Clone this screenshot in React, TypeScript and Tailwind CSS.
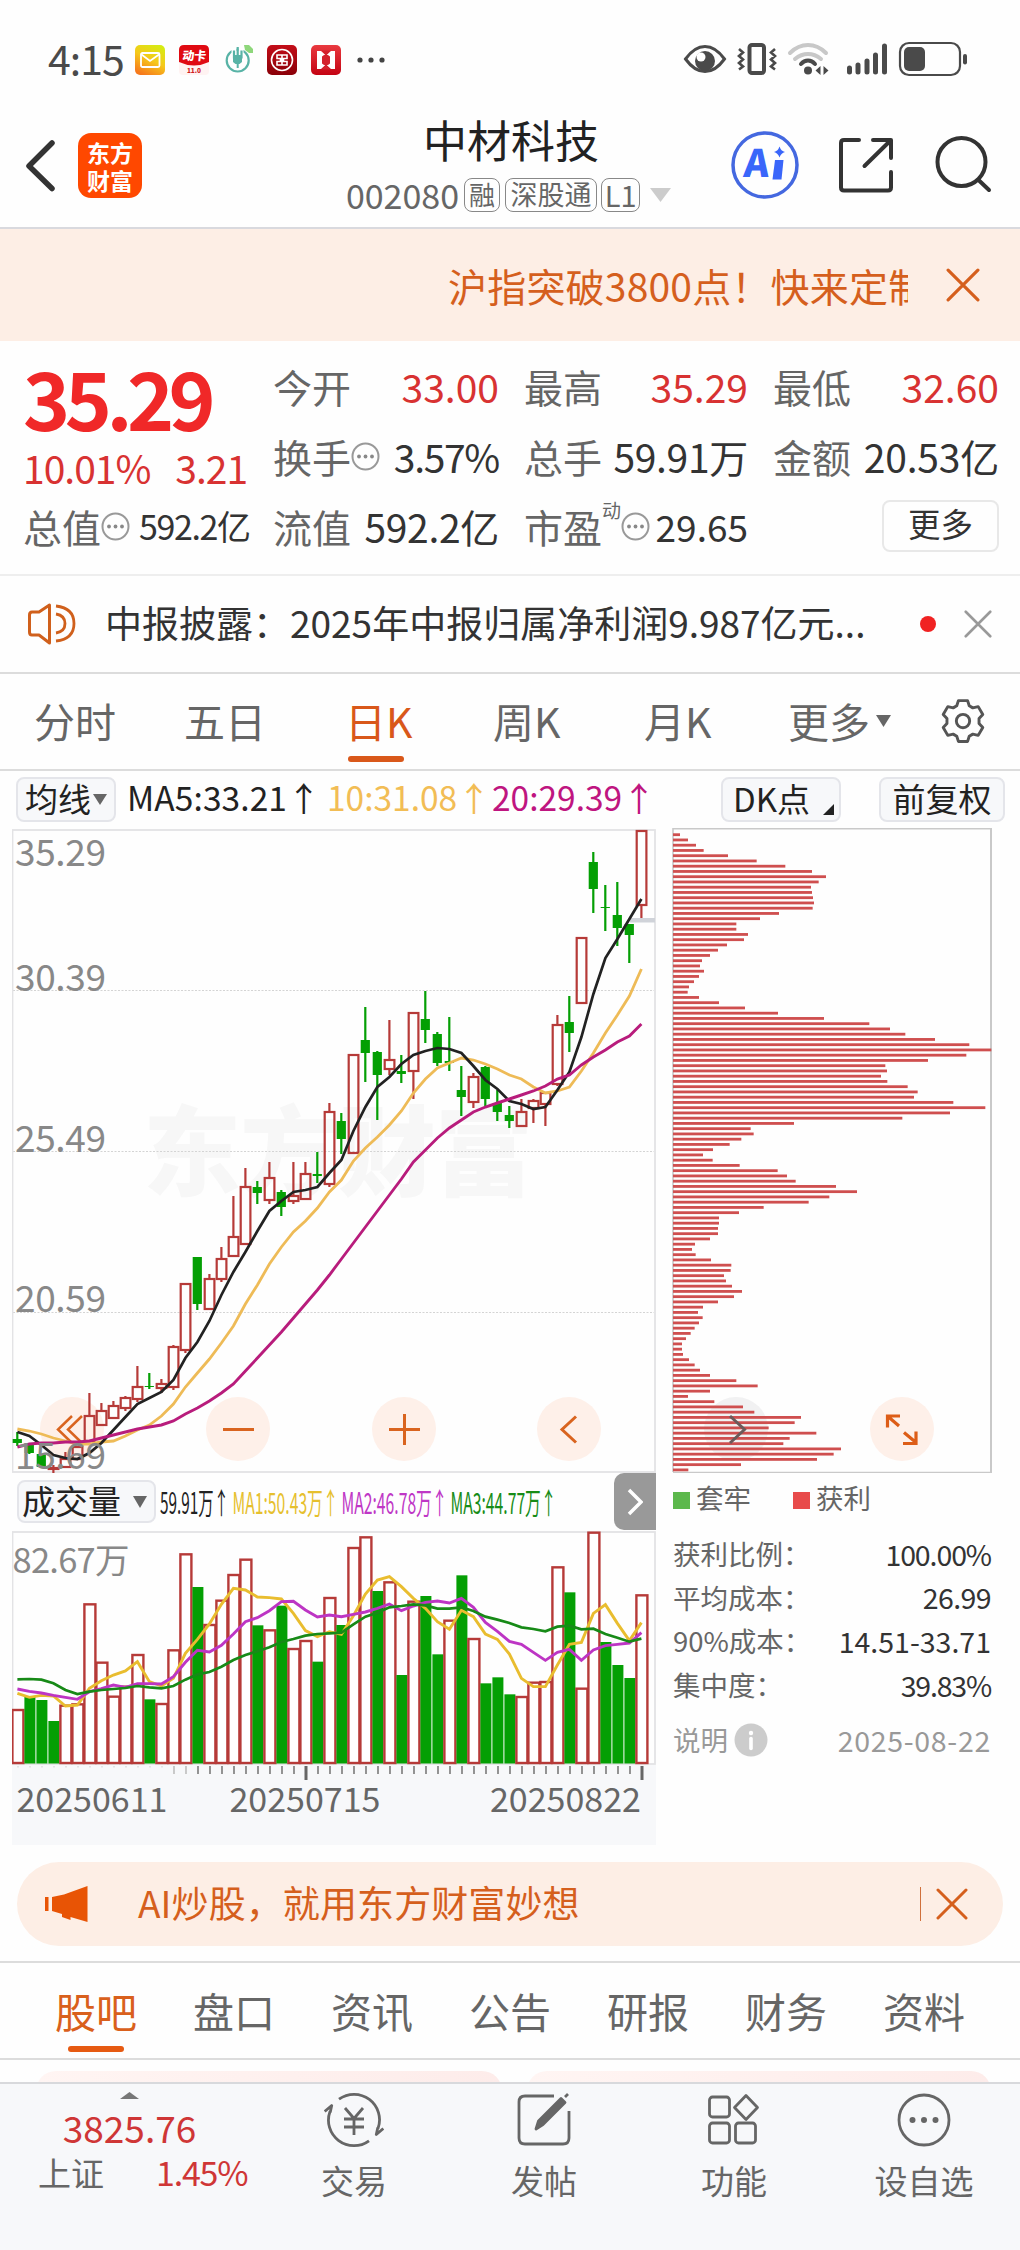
import React from 'react';

type Candle = [up: number, top: number, bottom: number, high: number, low: number];

const X0 = 17.4;
const STEP = 12;

const candles: Candle[] = [
  [0, 1439, 1443, 1432, 1446], [0, 1445, 1453, 1445, 1454], [0, 1454, 1467, 1454, 1468],
  [1, 1468, 1469, 1465, 1473], [1, 1459, 1467, 1452, 1467], [1, 1447, 1459, 1447, 1459],
  [1, 1416, 1441, 1393, 1441], [1, 1411, 1425, 1403, 1425], [1, 1406, 1418, 1401, 1418],
  [1, 1398, 1408, 1396, 1411], [1, 1387, 1399, 1366, 1402], [0, 1386, 1387, 1373, 1389],
  [1, 1384, 1388, 1379, 1393], [1, 1347, 1387, 1345, 1390], [1, 1284, 1350, 1284, 1353],
  [0, 1257, 1304, 1257, 1310], [1, 1279, 1309, 1274, 1309], [1, 1259, 1279, 1247, 1282],
  [1, 1237, 1256, 1196, 1256], [1, 1187, 1244, 1168, 1244], [0, 1187, 1193, 1181, 1204],
  [1, 1178, 1200, 1162, 1204], [0, 1192, 1207, 1190, 1216], [1, 1196, 1201, 1162, 1204],
  [1, 1174, 1199, 1162, 1199], [0, 1174, 1176, 1152, 1183], [1, 1112, 1184, 1103, 1187],
  [0, 1121, 1139, 1113, 1154], [1, 1055, 1153, 1055, 1153], [0, 1040, 1053, 1007, 1082],
  [0, 1052, 1075, 1051, 1120], [1, 1060, 1069, 1020, 1075], [0, 1071, 1074, 1055, 1083],
  [1, 1013, 1071, 1013, 1099], [0, 1019, 1030, 991, 1043], [0, 1034, 1063, 1032, 1066],
  [0, 1061, 1063, 1017, 1071], [0, 1090, 1097, 1066, 1116], [1, 1077, 1102, 1073, 1108],
  [0, 1067, 1099, 1066, 1106], [0, 1103, 1112, 1090, 1121], [0, 1115, 1121, 1106, 1128],
  [1, 1112, 1126, 1099, 1126], [1, 1101, 1108, 1099, 1123], [1, 1093, 1104, 1093, 1126],
  [1, 1025, 1084, 1015, 1086], [0, 1022, 1033, 996, 1052], [1, 938, 1003, 938, 1003],
  [0, 862, 889, 852, 913], [0, 907, 908, 885, 931], [0, 915, 928, 882, 946],
  [0, 924, 935, 924, 963], [1, 831, 905, 831, 918],
];

const ma5 = [
  1432, 1436, 1445, 1455, 1458, 1459, 1453, 1443, 1430, 1417, 1404, 1398, 1392, 1380, 1358, 1342, 1321, 1295,
  1272, 1252, 1231, 1211, 1201, 1192, 1190, 1187, 1173, 1160, 1131, 1107, 1087, 1077, 1064, 1055, 1051, 1048,
  1049, 1053, 1066, 1080, 1089, 1101, 1104, 1109, 1107, 1090, 1072, 1037, 994, 958, 939, 919, 899,
];
const ma10 = [
  1429, 1431, 1434, 1438, 1441, 1444, 1444, 1442, 1441, 1436, 1430, 1425, 1416, 1404, 1387, 1373, 1359, 1343,
  1326, 1304, 1285, 1264, 1247, 1232, 1221, 1208, 1192, 1180, 1161, 1148, 1137, 1125, 1111, 1093, 1079, 1068,
  1063, 1058, 1060, 1064, 1069, 1075, 1079, 1087, 1093, 1091, 1087, 1071, 1053, 1033, 1015, 996, 969,
];
const ma20 = [
  1447, 1444, 1443, 1443, 1442, 1442, 1441, 1438, 1435, 1432, 1429, 1427, 1425, 1421, 1414, 1408, 1401, 1393,
  1384, 1371, 1358, 1345, 1332, 1318, 1304, 1290, 1275, 1259, 1243, 1227, 1211, 1195, 1179, 1162, 1150, 1138,
  1128, 1120, 1112, 1107, 1103, 1099, 1095, 1091, 1086, 1079, 1075, 1065, 1057, 1050, 1042, 1036, 1024,
];

// volume series are stored as depth below the panel top, in thirds of a pixel
const volumes: [number, number][] = [
  [1, 720], [0, 680], [0, 690], [0, 753], [1, 707], [1, 703], [1, 403], [1, 578], [1, 680], [1, 650], [1, 555],
  [0, 688], [1, 702], [1, 541], [1, 253], [0, 351], [1, 465], [1, 392], [1, 315], [1, 269], [0, 466], [1, 481],
  [0, 407], [1, 537], [1, 513], [0, 575], [1, 384], [0, 465], [1, 234], [1, 202], [0, 363], [1, 337], [0, 615],
  [1, 395], [0, 378], [0, 553], [1, 452], [0, 316], [1, 507], [0, 640], [0, 622], [0, 673], [1, 681], [1, 638],
  [1, 636], [1, 292], [0, 367], [1, 656], [1, 188], [0, 516], [0, 585], [0, 624], [1, 376],
];
const vma1 = [
  670, 682, 676, 678, 708, 705, 655, 632, 615, 603, 575, 635, 648, 625, 550, 508, 462, 403, 355, 360, 381, 383,
  387, 430, 482, 500, 485, 493, 437, 372, 330, 320, 350, 385, 415, 455, 478, 421, 440, 492, 508, 552, 625, 650,
  650, 585, 523, 517, 430, 404, 460, 512, 458,
];
const vma2 = [
  657, 664, 669, 676, 682, 688, 665, 656, 645, 652, 641, 641, 642, 620, 577, 541, 546, 526, 492, 455, 443, 422,
  395, 394, 420, 441, 435, 440, 433, 426, 415, 402, 422, 408, 397, 393, 399, 385, 412, 457, 484, 514, 523, 547,
  571, 547, 538, 571, 540, 527, 523, 519, 488,
];
const vma3 = [
  628, 627, 629, 640, 660, 672, 665, 660, 657, 654, 648, 652, 655, 648, 629, 613, 606, 590, 570, 555, 544, 532,
  516, 507, 497, 492, 490, 488, 463, 440, 428, 412, 408, 403, 406, 416, 416, 412, 423, 440, 449, 459, 472, 477,
  484, 470, 467, 478, 476, 492, 503, 515, 506,
];

const chips = [
  60, 84, 108, 131, 204, 290, 376, 456, 498, 476, 453, 456, 459, 462, 458, 357, 300, 229, 229, 264, 252, 201, 174,
  150, 126, 120, 132, 117, 102, 87, 83, 117, 177, 255, 354, 492, 628, 690, 736, 825, 928, 994, 919, 804, 676, 681,
  663, 682, 743, 773, 762, 880, 976, 870, 727, 402, 272, 281, 244, 209, 159, 129, 158, 239, 353, 381, 407, 528,
  591, 508, 446, 311, 237, 177, 177, 174, 174, 150, 105, 96, 107, 153, 214, 212, 192, 198, 216, 246, 222, 174, 129,
  114, 128, 117, 104, 92, 78, 66, 66, 69, 87, 104, 120, 150, 229, 293, 150, 84, 163, 249, 283, 423, 404, 326, 469,
  389, 370, 543, 521, 471, 243, 85,
];

const cx = (i: number) => X0 + i * STEP;
const linePoints = (ys: number[]) => ys.map((y, i) => `${cx(i)},${y}`).join(' ');
const volY = (v: number) => 1470 + v / 3;

const MoreDot: React.FC = () => (
  <svg className="h-[29px] w-[29px] shrink-0" viewBox="0 0 29 29">
    <circle cx="14.5" cy="14.5" r="13" fill="none" stroke="#999" strokeWidth="2" />
    {[8, 14.5, 21].map((x) => (
      <circle key={x} cx={x} cy="14.5" r="1.9" fill="#888" />
    ))}
  </svg>
);

const Cross: React.FC<{ className: string; width?: number }> = ({ className, width = 3 }) => (
  <svg className={className} viewBox="0 0 32 32" fill="none" stroke="currentColor" strokeWidth={width} strokeLinecap="round">
    <path d="M2 2 30 30M30 2 2 30" />
  </svg>
);

const StatusBar: React.FC = () => (
  <div className="flex h-[110px] items-start pl-[48px] pt-[40px] text-[#4a4a4a]">
    <span className="-mt-[1px] w-[87px] text-[41px] leading-[36px] tracking-[-1px]">4:15</span>
    <div className="flex items-center gap-[14px] pt-[5px]">
      <svg className="h-[30px] w-[30px]" viewBox="0 0 30 30">
        <defs>
          <linearGradient id="mail" x1="0.8" y1="0" x2="0.3" y2="1">
            <stop offset="0" stopColor="#d5ec12" />
            <stop offset="0.5" stopColor="#f6c81a" />
            <stop offset="1" stopColor="#f6791c" />
          </linearGradient>
        </defs>
        <rect width="30" height="30" rx="5" fill="url(#mail)" />
        <rect x="6" y="8" width="18.5" height="14" rx="1.5" fill="none" stroke="#fff" strokeWidth="1.8" />
        <path d="M6.500 9.500 15 16l9-6.500" fill="none" stroke="#fff" strokeWidth="1.800" />
      </svg>
      <svg className="h-[30px] w-[30px]" viewBox="0 0 30 30">
        <rect y="12" width="30" height="18" rx="4" fill="#fff3f2" />
        <path d="M0 5q0-5 5-5h20q5 0 5 5v12q-15 7-30 0z" fill="#e00a12" />
        <text x="15" y="15.500" fontSize="12" fontWeight="900" fill="#fff" textAnchor="middle" transform="skewX(-6) translate(1.500 0)">动卡</text>
        <text x="15" y="28" fontSize="6.500" fontWeight="900" fill="#d01c22" textAnchor="middle">11.0</text>
      </svg>
      <svg className="h-[30px] w-[30px]" viewBox="0 0 30 30" fill="none" stroke="#58b3a6">
        <circle cx="14.700" cy="15.500" r="11" strokeWidth="2.200" />
        <path d="M11 3v11h7V3" stroke="#fff" strokeWidth="5" />
        <path d="M11 5.500v8M18.500 5.500v8M14.700 2v8" strokeWidth="2.200" />
        <path d="M10 10h9v7l-2.500 2h-4L10 17z" fill="#58b3a6" stroke="none" />
        <path d="M14.700 18v5" strokeWidth="2" />
        <path d="M21 0h5l4 4v4h-4l-4-3z" fill="#8ed77b" stroke="none" />
      </svg>
      <svg className="h-[30px] w-[30px]" viewBox="0 0 30 30" fill="none" stroke="#fff">
        <defs>
          <linearGradient id="icbc" x1="0" y1="0" x2="0" y2="1">
            <stop offset="0" stopColor="#c30d18" />
            <stop offset="1" stopColor="#8a0008" />
          </linearGradient>
        </defs>
        <rect width="30" height="30" rx="5" fill="url(#icbc)" stroke="none" />
        <circle cx="15" cy="15" r="10.500" strokeWidth="1.600" />
        <path d="M10 10h10v3.500h-3.500v3H20V20H10v-3.500h3.500v-3H10zM15 10v10" strokeWidth="1.600" />
      </svg>
      <svg className="h-[30px] w-[30px]" viewBox="0 0 30 30">
        <defs>
          <linearGradient id="bank" x1="0" y1="0" x2="0" y2="1">
            <stop offset="0" stopColor="#e93a40" />
            <stop offset="1" stopColor="#c40313" />
          </linearGradient>
        </defs>
        <rect width="30" height="30" rx="5" fill="url(#bank)" />
        <path d="M6 6h4l5 4.500L20 6h4v18h-4l-5-4.500L10 24H6z" fill="#fff" />
        <path d="M11 11.500 13 10h4l2 1.500v7L17 20h-4l-2-1.500z" fill="#d3222c" />
        <path d="M10.500 5.500h9L15 10.500zM10.500 24.500h9L15 19.500z" fill="#d3222c" />
      </svg>
      <svg className="ml-[2px] h-[30px] w-[28px]" viewBox="0 0 28 30" fill="#444">
        <circle cx="3" cy="15" r="2.600" />
        <circle cx="14" cy="15" r="2.600" />
        <circle cx="25" cy="15" r="2.600" />
      </svg>
    </div>
    <svg className="ml-auto mr-[50px] h-[38px] w-[290px]" viewBox="680 40 290 38" fill="none" stroke="#4a4a4a">
      <path d="M685.500 59q9-12.500 19.500-12.500T724.500 59q-9 12.500-19.500 12.500T685.500 59z" strokeWidth="3" />
      <circle cx="705" cy="61" r="10" fill="#4a4a4a" stroke="none" />
      <circle cx="701" cy="57" r="4.500" fill="#fff" stroke="none" />
      <rect x="749.500" y="45" width="14.500" height="28" rx="2.500" strokeWidth="4" />
      <path d="M739 49l4 3.500-4 3.500 4 3.500-4 3.500 4 3.500-4 3M775 49l-4 3.500 4 3.500-4 3.500 4 3.500-4 3.500 4 3" strokeWidth="2.600" />
      <g strokeWidth="4" strokeLinecap="round">
        <path d="M790 53q8-8 18-8t18 8" stroke="#c8c8c8" />
        <path d="M795 59q6-5 13-5t13 5" stroke="#c8c8c8" />
        <path d="M801 64q3-3.500 7-3.500t7 3.500" />
      </g>
      <circle cx="808" cy="70.500" r="4" fill="#4a4a4a" stroke="none" />
      <path d="M820.500 66v9l-5-4.500zM823.500 66v9l5-4.500z" fill="#4a4a4a" stroke="none" />
      <g strokeWidth="5" strokeLinecap="round">
        <path d="M849.500 68v4M858 65v7M867 61v11M875.500 55v17M884.500 46v26" />
      </g>
      <rect x="900" y="43" width="60" height="32" rx="9" strokeWidth="2.200" />
      <rect x="904" y="47" width="21" height="24" rx="5" fill="#4a4a4a" stroke="none" />
      <path d="M965 56v6.500" strokeWidth="4" strokeLinecap="round" />
    </svg>
  </div>
);

const Header: React.FC = () => (
  <header className="flex h-[119px] items-start border-b-2 border-[#d9d9de] pl-[24px] pr-[26px]">
    <svg className="mt-[28px] h-[56px] w-[34px]" viewBox="0 0 34 56" fill="none" stroke="#333" strokeWidth="5.500" strokeLinecap="round" strokeLinejoin="round">
      <path d="M28 5 5 28l23 22.500" />
    </svg>
    <div className="ml-[20px] mt-[23px] flex h-[65px] w-[64px] flex-col items-center justify-center rounded-[13px] bg-[#ff4800] text-[23px] font-bold leading-[28px] text-white">
      <span>东方</span>
      <span>财富</span>
    </div>
    <div className="ml-[196px] flex w-[346px] flex-col items-center">
      <h1 className="h-[68px] pt-[1px] text-[44px] leading-[57px] text-[#222]">中材科技</h1>
      <div className="-ml-[5px] flex items-center text-[#666]">
        <span className="mr-[5px] text-[34px] leading-[34px]">002080</span>
        <span className="mr-[5px] h-[34px] w-[36px] rounded-[8px] border border-[#888] text-center text-[26px] leading-[30px]">融</span>
        <span className="mr-[4px] h-[34px] w-[92px] rounded-[8px] border border-[#888] text-center text-[27px] leading-[30px]">深股通</span>
        <span className="h-[34px] w-[39px] rounded-[8px] border border-[#888] text-center text-[29px] leading-[30px]">L1</span>
        <svg className="ml-[10px] h-[14px] w-[21px]" viewBox="0 0 21 14" fill="#ccc">
          <path d="M0 0h21L10.500 14z" />
        </svg>
      </div>
    </div>
    <svg className="ml-auto h-[118px] w-[270px]" viewBox="725 110 270 118" fill="none">
      <circle cx="766" cy="165" r="32" stroke="#4468e0" strokeWidth="3.500" />
      <g fill="#3a66fa" stroke="none">
        <text x="757" y="177.500" fontSize="38" fontWeight="900" textAnchor="middle" transform="skewX(-5) translate(15 0)">A</text>
        <path d="M776 160h8.500l-2 19.500h-9z" />
        <path d="M780.500 146.500q1.500 4.500 5.500 5.500-4 1-5.500 5.500-1.500-4.500-5.500-5.500 4-1 5.500-5.500z" />
      </g>
      <g stroke="#333" strokeWidth="4" strokeLinecap="round" strokeLinejoin="round">
        <path d="M860 140h-15q-3 0-3 3v44.500q0 3 3 3h44q3 0 3-3V172M874 140h18v18M891 141l-25.500 25" />
        <circle cx="962.500" cy="162" r="24" />
        <path d="M979.500 180l10.500 10" />
      </g>
    </svg>
  </header>
);

const stat = 'flex items-center text-[39px] leading-none';

const Quote: React.FC = () => (
  <section className="flex h-[235px] border-b-2 border-[#eeeeee] pl-[23px]">
    <div className="w-[250px]">
      <div className="mt-[20px] h-[76px] text-[80px] font-bold leading-[70px] tracking-[-5.500px] text-[#f02828]">35.29</div>
      <div className="flex h-[58px] items-center gap-[25px] pt-[2px] text-[39px] leading-none tracking-[-1px] text-[#d83232]">
        <span>10.01%</span>
        <span>3.21</span>
      </div>
      <div className="mt-[2px] flex h-[58px] items-center">
        <span className="text-[39px] leading-none text-[#666]">总值</span>
        <MoreDot />
        <span className="ml-[9px] text-[34px] leading-none tracking-[-1.400px] text-[#333]">592.2亿</span>
      </div>
    </div>
    <div className="grid h-[210px] w-[726px] grid-cols-[226px_224px_226px] grid-rows-[70px_70px_70px] gap-x-[25px] pt-[10px] text-[#333]">
      <div className={stat}>
        <span className="text-[#666]">今开</span>
        <span className="ml-auto text-[#d83232]">33.00</span>
      </div>
      <div className={stat}>
        <span className="text-[#666]">最高</span>
        <span className="ml-auto text-[#d83232]">35.29</span>
      </div>
      <div className={stat}>
        <span className="text-[#666]">最低</span>
        <span className="ml-auto text-[#d83232]">32.60</span>
      </div>
      <div className={stat}>
        <span className="text-[#666]">换手</span>
        <MoreDot />
        <span className="ml-auto tracking-[-1.300px]">3.57%</span>
      </div>
      <div className={stat}>
        <span className="text-[#666]">总手</span>
        <span className="ml-auto tracking-[-0.300px]">59.91万</span>
      </div>
      <div className={stat}>
        <span className="text-[#666]">金额</span>
        <span className="ml-auto tracking-[-0.200px]">20.53亿</span>
      </div>
      <div className={stat}>
        <span className="text-[#666]">流值</span>
        <span className="ml-auto tracking-[-0.300px]">592.2亿</span>
      </div>
      <div className={stat}>
        <span className="text-[#666]">市盈</span>
        <span className="mb-[34px] text-[19px] text-[#666]">动</span>
        <MoreDot />
        <span className="ml-auto text-[37px]">29.65</span>
      </div>
      <div className="flex items-center justify-end">
        <button className="h-[52px] w-[117px] rounded-[8px] border-2 border-[#e8e8e8] pb-[5px] text-[32.500px] leading-none">更多</button>
      </div>
    </div>
  </section>
);

const News: React.FC = () => (
  <section className="flex h-[98px] items-center border-b-2 border-[#dcdcdc]">
    <svg className="ml-[27px] h-[44px] w-[50px]" viewBox="0 0 50 44" fill="none" stroke="#d0601c" strokeWidth="3" strokeLinejoin="round">
      <path d="M22.500 3v38L12 33H5q-2.500 0-2.500-3V13q0-3 2.500-3h7z" />
      <path d="M29 12q9 1.500 9 9.500t-9 9.500M29 4q18 2 18 17.500T29 39" strokeWidth="2.800" />
    </svg>
    <span className="ml-[28px] whitespace-nowrap pb-[3px] text-[37px] leading-none text-[#333]">中报披露：2025年中报归属净利润9.987亿元...</span>
    <span className="ml-auto h-[16px] w-[16px] rounded-full bg-[#f02222]" />
    <Cross className="ml-[28px] mr-[28px] h-[28px] w-[28px] text-[#999]" />
  </section>
);

const PeriodTabs: React.FC = () => (
  <nav className="flex h-[97px] items-start border-b-2 border-[#dcdcdc] pt-[24px] text-[41px] leading-[44px] text-[#666]">
    <span className="ml-[34px] w-[150px]">分时</span>
    <span className="w-[161px]">五日</span>
    <span className="relative w-[148px] text-[#d9581a]">
      日K
      <i className="absolute left-[3px] top-[58px] h-[6px] w-[56px] rounded-full bg-[#d9581a]" />
    </span>
    <span className="w-[151px]">周K</span>
    <span className="w-[144px]">月K</span>
    <span className="w-[88px]">更多</span>
    <svg className="mt-[17px] h-[12px] w-[15px]" viewBox="0 0 15 12" fill="#666">
      <path d="M0 0h15L7.500 12z" />
    </svg>
    <svg className="ml-[47px] -mt-[2px] h-[50px] w-[50px]" viewBox="0 0 24 24" fill="none" stroke="#555" strokeWidth="1.400" strokeLinejoin="round">
      <path d="M9.800 2.200h4.400l.8 2.500 1.700 1 2.600-.6 2.200 3.800-1.800 1.900v2.400l1.800 1.900-2.200 3.800-2.600-.6-1.700 1-.8 2.500H9.800L9 19.300l-1.700-1-2.600.6-2.200-3.800 1.800-1.900v-2.400L2.500 8.900l2.200-3.800 2.600.6 1.700-1z" />
      <circle cx="12" cy="12" r="3.200" />
    </svg>
  </nav>
);

const chipBtn = 'flex items-center rounded-[8px] border-2 border-[#e4e5ea] bg-[#f7f8fa] leading-none text-[#222]';

const AverageRow: React.FC = () => (
  <div className="flex h-[57px] items-start pl-[16px] pt-[6px] text-[33px] leading-none">
    <div className={`${chipBtn} h-[45px] w-[100px] pl-[7px] pb-[3px]`}>
      均线
      <svg className="ml-[2px] mt-[2px] h-[11px] w-[14px]" viewBox="0 0 14 11" fill="#666">
        <path d="M0 0h14L7 11z" />
      </svg>
    </div>
    <span className="ml-[11px] w-[200px] whitespace-nowrap pt-[3px] text-[33.500px] tracking-[0.100px] text-[#222]">MA5:33.21↑</span>
    <span className="w-[165px] whitespace-nowrap pt-[3px] text-[33.500px] text-[#f2bd55]">10:31.08↑</span>
    <span className="whitespace-nowrap pt-[3px] text-[33.500px] text-[#bf1580]">20:29.39↑</span>
    <div className={`${chipBtn} relative ml-auto h-[45px] w-[120px] pl-[10px] pb-[3px]`}>
      DK点
      <svg className="absolute bottom-[5px] right-[5px] h-[11px] w-[11px]" viewBox="0 0 11 11" fill="#222">
        <path d="M11 0v11H0z" />
      </svg>
    </div>
    <div className={`${chipBtn} ml-[38px] mr-[15px] h-[45px] w-[126px] justify-center pb-[3px]`}>前复权</div>
  </div>
);

const PriceChart: React.FC = () => (
  <svg className="block h-[645px] w-[644px]" viewBox="12 828 644 645" fill="none">
    <text x="143" y="1188" fontSize="98" fontWeight="900" fill="#f7f7f7" textLength="390">东方财富</text>
    {[72, 238, 404, 569].map((x) => (
      <circle key={x} cx={x} cy="1429" r="32" fill="#fef0e9" />
    ))}
    {[990.500, 1151.500, 1312.500].map((y) => (
      <path key={y} d={`M13 ${y}H654`} stroke="#d4d4d4" strokeDasharray="2 1.500" />
    ))}
    <rect x="12.500" y="830" width="642.500" height="642" stroke="#e3e3e5" strokeWidth="1.800" />
    <g stroke="#d9641f" strokeWidth="3">
      <path d="M72 1416 58 1429.500 72 1443M82 1416 68 1429.500 82 1443" strokeWidth="2.500" />
      <path d="M223 1429.500h31M389 1429.500h31M404.500 1414v31M576 1416.500 562 1429.500 576 1442.500" />
    </g>
    <rect x="630" y="918" width="25" height="4.500" fill="#d0d3d9" />
    {candles.map(([up, top, bottom, high, low], i) =>
      up ? (
        <g key={i} stroke="#b63a38" strokeWidth="2.200">
          <path d={`M${cx(i)} ${high}V${top}M${cx(i)} ${bottom}V${low}`} />
          <rect x={cx(i) - 4.700} y={top} width="9.700" height={Math.max(1, bottom - top)} />
        </g>
      ) : (
        <g key={i} fill="#049f04">
          <rect x={cx(i) - 1.200} y={high} width="2.200" height={low - high} />
          <rect x={cx(i) - 4.700} y={top} width="9.200" height={Math.max(1, bottom - top)} />
        </g>
      ),
    )}
    <polyline points={linePoints(ma10)} stroke="#eebb57" strokeWidth="2.800" />
    <polyline points={linePoints(ma5)} stroke="#222" strokeWidth="2.700" />
    <polyline points={linePoints(ma20)} stroke="#b81c7c" strokeWidth="2.900" />
    <g fill="#888" fontSize="37">
      <text x="15" y="866" textLength="91">35.29</text>
      <text x="15" y="991" textLength="91">30.39</text>
      <text x="15" y="1152" textLength="91">25.49</text>
      <text x="15" y="1312" textLength="91">20.59</text>
      <text x="15" y="1469" textLength="91">15.69</text>
    </g>
  </svg>
);

const VolumeHead: React.FC = () => (
  <div className="flex h-[57px] items-center pl-[5px] text-[30px] leading-none">
    <div className={`${chipBtn} h-[43px] w-[139px] pb-[2px] pl-[3px] pr-[7px] text-[33px]`}>
      成交量
      <svg className="ml-auto mt-[3px] h-[12px] w-[14px]" viewBox="0 0 14 12" fill="#666">
        <path d="M0 0h14L7 12z" />
      </svg>
    </div>
    <svg className="h-[40px] w-[458px]" viewBox="156 1481 458 40" fontSize="29.500">
      <text x="160" y="1512.500" fill="#222" textLength="69" lengthAdjust="spacingAndGlyphs">59.91万↑</text>
      <text x="232.500" y="1512.500" fill="#e6c02e" textLength="106" lengthAdjust="spacingAndGlyphs">MA1:50.43万↑</text>
      <text x="341.500" y="1512.500" fill="#bf37c6" textLength="106" lengthAdjust="spacingAndGlyphs">MA2:46.78万↑</text>
      <text x="450.500" y="1512.500" fill="#178c17" textLength="106" lengthAdjust="spacingAndGlyphs">MA3:44.77万↑</text>
    </svg>
    <div className="flex h-[57px] w-[42px] items-center justify-center rounded-l-[10px] bg-[#999]">
      <svg className="h-[28px] w-[16px]" viewBox="0 0 16 28" fill="none" stroke="#fff" strokeWidth="3.500">
        <path d="M2 2 14 14 2 26" />
      </svg>
    </div>
  </div>
);

const VolumeChart: React.FC = () => (
  <svg className="block h-[315px] w-[644px]" viewBox="12 1530 644 315" fill="none">
    <rect x="12" y="1765" width="644" height="80" fill="#f7f8fa" />
    <rect x="12.500" y="1532" width="642.500" height="232" stroke="#e3e3e5" strokeWidth="1.800" />
    <text x="12.500" y="1573" fontSize="34.500" fill="#888" textLength="117">82.67万</text>
    {volumes.map(([up, v], i) =>
      up ? (
        <rect key={i} x={cx(i) - 5} y={volY(v)} width="11" height={1763 - volY(v)} fill="#fff" stroke="#b63a38" strokeWidth="2.400" />
      ) : (
        <rect key={i} x={cx(i) - 5} y={volY(v)} width="11" height={1763.500 - volY(v)} fill="#049f04" />
      ),
    )}
    <polyline points={linePoints(vma1.map(volY))} stroke="#e9bd2f" strokeWidth="2.900" />
    <polyline points={linePoints(vma2.map(volY))} stroke="#bd35c4" strokeWidth="2.900" />
    <polyline points={linePoints(vma3.map(volY))} stroke="#178a17" strokeWidth="2.700" />
    {volumes.map((_, i) => {
      const major = i === 24 || i === 52;
      return (
        <path
          key={i}
          d={`M${cx(i) + 0.600} 1766V${major ? 1780 : i < 13 ? 1767.500 : 1774}`}
          stroke={i < 13 ? '#e0e0e0' : i < 15 ? '#c4c4c4' : major ? '#666' : '#888'}
          strokeWidth={major ? 3 : 1.800}
        />
      );
    })}
    <g fill="#666" fontSize="34">
      <text x="16.500" y="1811.500">20250611</text>
      <text x="229.500" y="1811.500">20250715</text>
      <text x="490" y="1811.500">20250822</text>
    </g>
  </svg>
);

const ChipChart: React.FC = () => (
  <svg className="block h-[645px] w-[364px]" viewBox="656 828 364 645" fill="none">
    <path d="M673 1472V828.800H991V1472.500H673" stroke="#c9c9c9" strokeWidth="1.600" />
    <path d="M991 828V1473" stroke="#c9c9c9" strokeWidth="2" />
    <circle cx="736" cy="1429" r="32" fill="#f1f1f2" />
    <circle cx="902" cy="1429" r="32" fill="#fef0e9" />
    {chips.map((v, i) => (
      <rect key={i} x="673" y={833.300 + (i * 635.200) / (chips.length - 1)} width={(v - 39) / 3} height="2.800" fill="#cf4f4f" />
    ))}
    <path d="M730 1416 744.500 1429.500 730 1443" stroke="#6b5a5a" strokeWidth="3" />
    <g stroke="#dd5d17" strokeWidth="3.200">
      <path d="M887.500 1427.500V1416H900M888 1416.500l11 9.500M904 1432.500l12 10M903 1443.500h13V1431.500" />
    </g>
  </svg>
);

const chipStats = [
  ['获利比例：', '100.00%', 'tracking-[-1.100px]'],
  ['平均成本：', '26.99', 'tracking-[-0.600px]'],
  ['90%成本：', '14.51-33.71', 'tracking-[0px]'],
  ['集中度：', '39.83%', 'tracking-[-1.200px]'],
];

const ChipPanel: React.FC = () => (
  <aside className="w-[364px]">
    <ChipChart />
    <div className="flex h-[54px] items-center pl-[17px] text-[27.500px] leading-none text-[#666]">
      <i className="h-[17px] w-[17px] bg-[#5cb84c]" />
      <span className="ml-[6px] w-[97px] pb-[4px]">套牢</span>
      <i className="h-[17px] w-[17px] bg-[#e84b4b]" />
      <span className="ml-[6px] pb-[4px]">获利</span>
    </div>
    <div className="pl-[17px] pr-[29px] pt-[5px] text-[27.500px] leading-none">
      {chipStats.map(([label, value, tracking]) => (
        <div key={label} className="flex h-[43.700px] items-center justify-between">
          <span className="whitespace-nowrap text-[#666]">{label}</span>
          <span className={`whitespace-nowrap text-[28.500px] text-[#333] ${tracking}`}>{value}</span>
        </div>
      ))}
      <div className="mt-[11px] flex h-[44px] items-center text-[#999]">
        <span>说明</span>
        <svg className="ml-[6px] h-[34px] w-[34px]" viewBox="0 0 34 34">
          <circle cx="17" cy="17" r="16.500" fill="#ccc" />
          <circle cx="17" cy="10" r="2.200" fill="#fff" />
          <path d="M17 15.500v10" stroke="#fff" strokeWidth="3.600" strokeLinecap="round" />
        </svg>
        <span className="ml-auto text-[28.500px] tracking-[0.700px]">2025-08-22</span>
      </div>
    </div>
  </aside>
);

const AiBanner: React.FC = () => (
  <div className="mx-[17px] mt-[17px] flex h-[84px] items-center rounded-full bg-[#fdeee5] text-[#d55f1d]">
    <svg className="ml-[27px] h-[38px] w-[46px]" viewBox="0 0 46 38" fill="#e85405">
      <path d="M1 12h3.500v14H1zM8 12 20 9.500 43.500 1v36l-17-5v3l-8.500-3v-3L8 26z" />
    </svg>
    <span className="ml-[48px] pb-[4px] text-[37px] leading-none tracking-[0.100px]">AI炒股，就用东方财富妙想</span>
    <i className="ml-auto h-[34px] w-[1.500px] bg-[#d0703c]" />
    <Cross className="ml-[15px] mr-[35px] h-[32px] w-[32px]" />
  </div>
);

const sections = ['股吧', '盘口', '资讯', '公告', '研报', '财务', '资料'];

const SectionTabs: React.FC = () => (
  <nav className="mt-[15px] flex h-[99px] border-y-2 border-[#dcdcdc] pl-[27px] pr-[27px] text-[41px] text-[#666]">
    {sections.map((name, i) => (
      <span key={name} className={`relative flex w-[138px] justify-center pt-[25px] leading-[44px] ${i === 0 ? 'text-[#d9601c]' : ''}`}>
        {name}
        {i === 0 && <i className="absolute left-[41px] top-[83px] h-[6px] w-[56px] rounded-full bg-[#e65a12]" />}
      </span>
    ))}
  </nav>
);

const tools: { label: string; icon: React.ReactNode }[] = [
  {
    label: '交易',
    icon: (
      <>
        <path d="M15 9.200A25.500 25.500 0 0 1 54 38.500M53.800 37.500l-1.500 7 7-6" />
        <path d="M45 50.800A25.500 25.500 0 0 1 6 21.500M6.200 22.500l1.500-7-7 6" />
        <path d="M21 18l9 10.500L39 18M30 28.500V45M20 29h20M20 37h20" />
      </>
    ),
  },
  {
    label: '发帖',
    icon: (
      <>
        <path d="M40 6H11q-6 0-6 6v36q0 6 6 6h38q6 0 6-6V21" />
        <path d="M22 39l2.500-8L47 8.500l4 4L29 34.500zM51 7l3-3" fill="#666" />
      </>
    ),
  },
  {
    label: '功能',
    icon: (
      <>
        <rect x="5.500" y="7" width="20" height="20" rx="3" />
        <rect x="5.500" y="33" width="20" height="20" rx="3" />
        <rect x="31.500" y="33" width="20" height="20" rx="3" />
        <path d="M42 5.500 53.500 17.500 42 29.500 30.500 17.500z" />
      </>
    ),
  },
  {
    label: '设自选',
    icon: (
      <>
        <circle cx="30" cy="30" r="25" />
        <g fill="#666" stroke="none">
          <circle cx="18.500" cy="30" r="3" />
          <circle cx="30" cy="30" r="3" />
          <circle cx="41.500" cy="30" r="3" />
        </g>
      </>
    ),
  },
];

const BottomBar: React.FC = () => (
  <footer className="flex h-[168px] border-t-2 border-[#d8d9dc] bg-[#f7f8fa] leading-none">
    <div className="relative w-[259px]">
      <svg className="absolute left-[120px] top-[8px] h-[7px] w-[19px]" viewBox="0 0 19 7" fill="#777">
        <path d="M0 7h19L9.500 0z" />
      </svg>
      <div className="pt-[25px] text-center text-[37px] text-[#cf3636]">3825.76</div>
      <div className="mt-[9px] flex items-center pl-[38px]">
        <span className="w-[118px] text-[33px] text-[#666]">上证</span>
        <span className="text-[34px] tracking-[-1.200px] text-[#cf3636]">1.45%</span>
      </div>
    </div>
    {tools.map(({ label, icon }) => (
      <div key={label} className="flex w-[190px] flex-col items-center pt-[6px] text-[33px] text-[#666]">
        <svg className="h-[60px] w-[60px]" viewBox="0 0 60 60" fill="none" stroke="#666" strokeWidth="2.800" strokeLinejoin="round">
          {icon}
        </svg>
        <span className="mt-[14px]">{label}</span>
      </div>
    ))}
  </footer>
);

const App: React.FC = () => (
  <div className="h-[2250px] w-[1020px] overflow-hidden bg-[#fefefe] font-['Noto_Sans_CJK_SC',sans-serif]">
    <StatusBar />
    <Header />
    <div className="flex h-[112px] items-center bg-[#fdeee5] text-[#d55f1d]">
      <div className="ml-[448px] w-[460px] overflow-hidden whitespace-nowrap text-[39px] leading-[56px] tracking-[0.200px]">沪指突破3800点！快来定制</div>
      <Cross className="ml-[38px] h-[34px] w-[34px]" />
    </div>
    <Quote />
    <News />
    <PeriodTabs />
    <AverageRow />
    <div className="flex">
      <div className="ml-[12px] w-[644px]">
        <PriceChart />
        <VolumeHead />
        <VolumeChart />
      </div>
      <ChipPanel />
    </div>
    <AiBanner />
    <SectionTabs />
    <div className="flex h-[22px] gap-[25px] overflow-hidden pl-[36px] pt-[11px]">
      <div className="h-[40px] w-[466px] rounded-t-[20px] bg-linear-to-r from-[#fff5f3] to-[#fdecea]" />
      <div className="h-[40px] w-[464px] rounded-t-[20px] bg-linear-to-r from-[#fff5f3] to-[#fdecea]" />
    </div>
    <BottomBar />
  </div>
);

export default App;
